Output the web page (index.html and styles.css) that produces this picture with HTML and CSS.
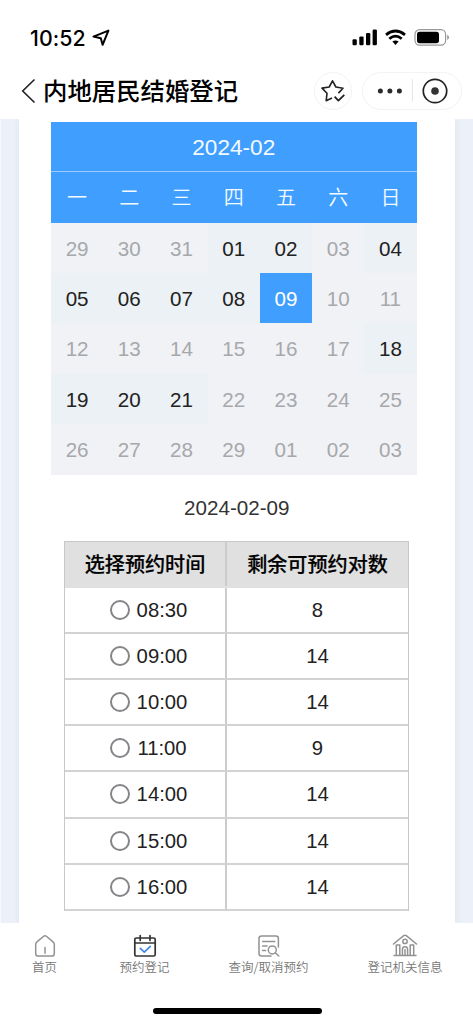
FILE: index.html
```html
<!DOCTYPE html>
<html lang="zh-CN">
<head>
<meta charset="utf-8">
<title>内地居民结婚登记</title>
<link rel="stylesheet" href="styles.css">
</head>
<body>
<div class="phone">
  <div class="status">
    <span class="clock">10:52</span>
    <svg class="loc" width="18" height="18" viewBox="0 0 18 18"><path d="M1.5 7.6 16.4 1.6 10.6 15.8 8.8 9.2Z" fill="none" stroke="#000" stroke-width="2" stroke-linejoin="round"/></svg>
    <svg class="signals" width="98" height="18" viewBox="0 0 98 18">
      <rect x="0.5" y="10.3" width="4.3" height="5.9" rx="1.2"/><rect x="7.3" y="7.4" width="4.3" height="8.8" rx="1.2"/><rect x="14" y="4" width="4.3" height="12.2" rx="1.2"/><rect x="20.6" y="0.6" width="4.3" height="15.6" rx="1.2"/>
      <g fill="none" stroke="#000" stroke-width="2.8"><path d="M34 5.8Q43.5-1.8 53 5.8"/><path d="M37.3 9.8Q43.5 4.5 49.7 9.8"/></g>
      <path d="M40.4 12.6Q43.5 10.3 46.6 12.6L43.5 15.9Z"/>
      <rect x="63" y="0.7" width="30.6" height="15.4" rx="4.6" fill="none" stroke="#999" stroke-width="1.2"/>
      <rect x="65" y="2.7" width="22" height="11.5" rx="2.6"/><path d="M95.2 5.8Q99 8.4 95.2 11Z" fill="#999"/>
    </svg>
  </div>
  <header class="nav">
    <svg class="back" width="15" height="26" viewBox="0 0 15 26"><path d="M13.5 1.5 1.7 13 13.5 24.5" fill="none" stroke="#222" stroke-width="1.6"/></svg>
    <h1>内地居民结婚登记</h1>
    <div class="round">
      <svg width="26" height="26" viewBox="0 0 26 26" fill="none" stroke="#222" stroke-width="1.6" stroke-linejoin="round"><path d="M12 20 6.2 22.7 7 15.3 2 10.1 9.2 9 12.5 2.8 15.9 9 23 10.2 18.4 15.1"/><path d="M14.6 18.7 18.4 22.6 24.3 16.8" stroke-width="1.8"/></svg>
    </div>
    <div class="capsule">
      <svg width="26" height="6" viewBox="0 0 26 6" fill="#2b2b2b"><circle cx="3.4" cy="3" r="2.5"/><circle cx="12.9" cy="3" r="2.5"/><circle cx="22.4" cy="3" r="2.5"/></svg>
      <i class="divider"></i>
      <svg width="26" height="26" viewBox="0 0 26 26"><circle cx="13" cy="13" r="11.7" fill="none" stroke="#222" stroke-width="1.7"/><circle cx="13" cy="13" r="3.8" fill="#333"/></svg>
    </div>
  </header>
  <main class="page">
    <div class="card">
      <section class="calendar">
        <div class="month">2024-02</div>
        <div class="week"><span>一</span><span>二</span><span>三</span><span>四</span><span>五</span><span>六</span><span>日</span></div>
        <div class="days">
          <span>29</span><span>30</span><span>31</span><span class="open">01</span><span class="open">02</span><span>03</span><span class="open">04</span>
          <span class="open">05</span><span class="open">06</span><span class="open">07</span><span class="open">08</span><span class="picked">09</span><span>10</span><span>11</span>
          <span>12</span><span>13</span><span>14</span><span>15</span><span>16</span><span>17</span><span class="open">18</span>
          <span class="open">19</span><span class="open">20</span><span class="open">21</span><span>22</span><span>23</span><span>24</span><span>25</span>
          <span>26</span><span>27</span><span>28</span><span>29</span><span>01</span><span>02</span><span>03</span>
        </div>
      </section>
      <p class="date">2024-02-09</p>
      <section class="slots">
        <div class="row head"><div>选择预约时间</div><div>剩余可预约对数</div></div>
        <div class="row"><div><i class="radio"></i>08:30</div><div>8</div></div>
        <div class="row"><div><i class="radio"></i>09:00</div><div>14</div></div>
        <div class="row"><div><i class="radio"></i>10:00</div><div>14</div></div>
        <div class="row"><div><i class="radio"></i>11:00</div><div>9</div></div>
        <div class="row"><div><i class="radio"></i>14:00</div><div>14</div></div>
        <div class="row"><div><i class="radio"></i>15:00</div><div>14</div></div>
        <div class="row"><div><i class="radio"></i>16:00</div><div>14</div></div>
      </section>
    </div>
  </main>
  <nav class="tabs">
    <a><svg width="24" height="24" viewBox="0 0 24 24"><path d="M4.5 7.4 10.7 2.2Q12 1.3 13.3 2.2L19.5 7.4Q21.3 8.9 21.3 10.2V19.5Q21.3 22.1 18.7 22.1H5.3Q2.7 22.1 2.7 19.5V10.2Q2.7 8.9 4.5 7.4ZM12 13.5V19.2"/></svg>首页</a>
    <a class="active"><svg width="24" height="24" viewBox="0 0 24 24"><rect x="1.8" y="4" width="20.4" height="18" rx="1.6"/><path d="M2 9H22M7.2 1.5V6.4M17 1.5V6.4"/><path class="tick" d="M7.3 14.3 11.3 18.1 17.3 12.3"/></svg>预约登记</a>
    <a><svg width="24" height="24" viewBox="0 0 24 24"><path d="M14 22H4.5Q2 22 2 19.5V4.5Q2 2 4.5 2H18.9Q21.4 2 21.4 4.5V13M5.6 7.5H17.8M5.6 12H10M5.6 16.5H8.6"/><circle cx="15.3" cy="15.9" r="4"/><path d="M18.2 18.8 21.8 22"/></svg>查询/取消预约</a>
    <a><svg width="26" height="24" viewBox="0 0 26 24"><path d="M1.5 10 11.7 1.7Q13 .8 14.3 1.7L24.5 10M2 21.5H24M4.3 21V11M7.8 21V11M4.3 11H7.8M18.2 21V11M21.7 21V11M18.2 11H21.7M10.4 21V15.3Q10.4 12.7 13 12.7T15.6 15.3V21M13 15.5V21"/><circle cx="13" cy="7.4" r="2.2"/></svg>登记机关信息</a>
  </nav>
  <div class="home"></div>
</div>
</body>
</html>
```
FILE: styles.css
```css
* { box-sizing: border-box; }
body { margin: 0; background: #fff; font-family: "Liberation Sans", "Noto Sans CJK SC", sans-serif; color: #222; }
.phone { width: 473px; height: 1024px; overflow: hidden; display: flex; flex-direction: column; }
svg { display: block; flex: none; }

.status { height: 62px; padding: 13px 23px 0 30px; display: flex; align-items: center; flex: none; color: #000; }
.clock { font: 500 21.3px Inter, sans-serif; letter-spacing: .1px; }
.loc { margin-left: 6px; }
.signals { margin-left: auto; }

.nav { height: 57px; flex: none; display: flex; align-items: center; padding: 0 4px 0 21px; }
.nav h1 { margin: -2px auto 0 7px; font: 500 24.4px/36px "Noto Sans CJK SC", sans-serif; color: #000; white-space: nowrap; }
.round { width: 38px; height: 38px; border: 1px solid #f3f3f3; border-radius: 50%; display: flex; align-items: center; justify-content: center; }
.capsule { width: 100px; height: 38px; border: 1px solid #f3f3f3; border-radius: 19px; margin: 0 7px 0 10px; display: flex; align-items: center; padding-left: 14px; }
.divider { width: 1px; height: 23px; background: #e6e6e6; margin: 0 8.5px 0 9px; }

.page { height: 804px; flex: none; background: linear-gradient(90deg, #f5f8fc 0 1.5px, #ebf0f9 1.5px); padding: 0 18.5px 0 19px; overflow: hidden; }
.card { height: 804px; background: #fff; padding-top: 3px; box-shadow: 0 0 6px #dbe1ec; }
.calendar { width: 365.5px; margin-left: 32px; background: #f0f2f6; }
.month { height: 50px; border-bottom: 1px solid #9ccaf9; background: #409eff; color: #f4fbff; font-size: 22.6px; line-height: 51px; text-align: center; }
.week { height: 50.6px; display: grid; grid-template-columns: repeat(7, 1fr); background: #409eff; color: #f4fbff; text-align: center; font: 350 20px/50px "Noto Sans CJK SC", sans-serif; }
.days { display: grid; grid-template-columns: repeat(7, 1fr); grid-auto-rows: 50.4px; text-align: center; font-size: 20.6px; line-height: 51.6px; color: #a7a8ab; }
.days .open { background: #ebf1f5; color: #222; }
.days .picked { background: #409eff; color: #fff; }
.date { margin: 0; height: 66.4px; line-height: 66px; font-size: 20.6px; text-align: center; color: #333; }

.slots { width: 345px; margin: 0 0 0 45px; border: solid #c8c8c8; border-width: 1px 1px 0; }
.row { display: grid; grid-template-columns: 162px 1fr; height: 46.1px; border-bottom: 2px solid #d3d3d3; font-size: 20.3px; }
.row > div { display: flex; align-items: center; justify-content: center; padding-top: 1px; }
.row > div:first-child { border-right: 2px solid #ccc; }
.head { background: #e0e0e0; border-bottom-color: #e0e0e0; font: 500 20.1px "Noto Sans CJK SC", sans-serif; color: #000; -webkit-text-stroke: .2px #000; }
.row.head > div { padding-top: 0; }
.radio { width: 20px; height: 20px; border: 2px solid #858589; border-radius: 50%; margin: -1px 7px 0 7px; }

.tabs { height: 62px; flex: none; display: grid; grid-template-columns: 89px 111px 137px 136px; padding-top: 11px; }
.tabs a { display: flex; flex-direction: column; align-items: center; font: 350 12.5px/18px "Noto Sans CJK SC", sans-serif; color: #777; white-space: nowrap; }
.tabs svg { fill: none; stroke: #929292; stroke-width: 1.5; stroke-linecap: round; stroke-linejoin: round; }
.tabs .active svg { stroke: #333; stroke-width: 1.7; }
.tabs .active .tick { stroke: #4387e5; }
.home { width: 169px; height: 6px; border-radius: 3px; background: #000; margin: 23px auto 0 152.5px; flex: none; }
```
